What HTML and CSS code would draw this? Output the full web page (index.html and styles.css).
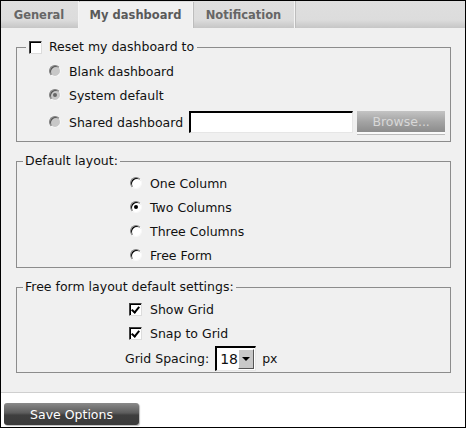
FILE: index.html
```html
<!DOCTYPE html>
<html lang="en">
<head>
    <meta charset="UTF-8"/>
    <title>Dashboard Options</title>
    <link rel="stylesheet" href="styles.css">
</head>
<body>
<div class="frame">
    <div class="tabs">
        <span class="tab tab-general">General</span>
        <span class="tab tab-dashboard active">My dashboard</span>
        <span class="tab tab-notify">Notification</span>
    </div>

    <div class="panel">
        <fieldset class="group group-reset">
            <legend><span class="check"></span>Reset my dashboard to</legend>
            <div class="row"><span class="radio off"></span>Blank dashboard</div>
            <div class="row"><span class="radio off on"></span>System default</div>
            <div class="row row-shared">
                <span class="radio off"></span>Shared dashboard
                <span class="textbox"></span>
                <span class="browse">Browse...</span>
            </div>
        </fieldset>

        <fieldset class="group group-layout">
            <legend>Default layout:</legend>
            <div class="row"><span class="radio"></span>One Column</div>
            <div class="row"><span class="radio on"></span>Two Columns</div>
            <div class="row"><span class="radio"></span>Three Columns</div>
            <div class="row"><span class="radio"></span>Free Form</div>
        </fieldset>

        <fieldset class="group group-free">
            <legend>Free form layout default settings:</legend>
            <div class="row"><span class="check on"></span>Show Grid</div>
            <div class="row"><span class="check on"></span>Snap to Grid</div>
            <div class="row row-spacing">
                Grid Spacing:
                <span class="select"><span class="select-value">18</span><span class="select-arrow"></span></span>
                px
            </div>
        </fieldset>
    </div>

    <div class="footer">
        <button class="save" type="button">Save Options</button>
    </div>
</div>
</body>
</html>
```

FILE: styles.css
```css
body {
    margin: 0;
    font-family: "DejaVu Sans", Verdana, sans-serif;
    font-size: 12.5px;
    color: #111;
}

.frame {
    width: 466px;
    height: 428px;
    box-sizing: border-box;
    border: 1px solid #000;
    background-color: #fff;
}

/* tab strip */
.tabs {
    display: flex;
    height: 27px;
    background: linear-gradient(#dfdfdf 0%, #dcdcdc 70%, #c6c6c6 100%);
}

.tab {
    display: flex;
    align-items: center;
    justify-content: center;
    font-size: 11.5px;
    font-weight: bold;
    color: #666;
    border-right: 1px solid #f4f4f4;
    box-shadow: 1px 0 0 #bdbdbd;
}

.tab-general {
    width: 76px;
    padding-right: 1px;
}

.tab-dashboard {
    width: 113px;
}

.tab-notify {
    width: 101px;
}

.tab.active {
    background-color: #f0f0f0;
    margin-top: 1px;
    color: #5a5a5a;
}

/* main panel */
.panel {
    background-color: #f0f0f0;
    padding: 12px 14px 19px 15px;
    border-bottom: 1px solid #cfcfcf;
}

.group {
    margin: 0;
    padding: 0 0 4px 0;
    border: 1px solid #8c8c8c;
    min-inline-size: 0;
}

.group + .group {
    margin-top: 12px;
}

.group legend {
    display: flex;
    align-items: center;
    line-height: 14px;
    height: 14px;
    padding: 0 2px;
    margin-left: 6px;
}

.group-reset legend {
    margin-left: 9px;
    padding: 0 3px;
    gap: 7px;
}

.group-reset {
    padding-top: 5px;
}

.group-layout,
.group-free {
    padding-top: 3px;
    padding-bottom: 0;
}

.row {
    display: flex;
    align-items: center;
    gap: 8px;
    height: 24px;
}

.group-reset .row {
    padding-left: 32px;
}

.group-layout .row {
    padding-left: 113px;
}

.group-free .row {
    padding-left: 112px;
}

.group-free .row-spacing {
    padding-left: 108px;
    height: 27px;
    gap: 6px;
}

.row-shared {
    height: 30px !important;
}

/* classic widgets */
.radio {
    width: 10px;
    height: 10px;
    flex: none;
    border-radius: 50%;
    background-color: #fff;
    border: 1px solid;
    border-color: #808080 #f8f8f8 #f8f8f8 #808080;
    box-shadow: inset 1px 1px 0 #000;
    position: relative;
}

.radio.off {
    background-color: #c8c8c8;
    box-shadow: inset 1px 1px 0 #555;
}

.radio.on::after {
    content: "";
    position: absolute;
    left: 3px;
    top: 3px;
    width: 4px;
    height: 4px;
    border-radius: 50%;
    background-color: #000;
}

.radio.off.on::after {
    background-color: #666;
}

.check {
    width: 11px;
    height: 11px;
    flex: none;
    background-color: #fff;
    border: 1px solid;
    border-color: #404040 #dcdcdc #dcdcdc #404040;
    box-shadow: inset 1px 1px 0 #000;
    position: relative;
}

.check.on::after {
    content: "";
    position: absolute;
    left: 3px;
    top: 1px;
    width: 3px;
    height: 6px;
    border: solid #000;
    border-width: 0 2px 2px 0;
    transform: rotate(40deg);
}

.textbox {
    width: 161px;
    height: 19px;
    margin-left: -2px;
    background-color: #fff;
    border: solid;
    border-color: #000 #e6e6e6 #e6e6e6 #000;
    border-width: 2px 1px 1px 2px;
}

.browse {
    width: 88px;
    height: 21px;
    margin-left: -4px;
    display: flex;
    align-items: center;
    justify-content: center;
    color: #d8d8d8;
    background: linear-gradient(#c4c4c4, #a4a4a4 50%, #8c8c8c);
    border-bottom: 2px solid #fafafa;
    box-shadow: 0 1px 0 #bbb;
}

.select {
    display: flex;
    width: 38px;
    height: 22px;
    background-color: #fff;
    border: solid;
    border-color: #000 #e6e6e6 #e6e6e6 #000;
    border-width: 2px 1px 1px 2px;
}

.select-value {
    flex: 1;
    padding-left: 3px;
    font-size: 14px;
    line-height: 22px;
}

.select-arrow {
    width: 16px;
    height: 20px;
    margin: 1px 1px 1px 0;
    background-color: #c8c8c8;
    border: 1px solid;
    border-color: #fff #555 #555 #fff;
    box-sizing: border-box;
    position: relative;
}

.select-arrow::after {
    content: "";
    position: absolute;
    left: 3px;
    top: 7px;
    border-left: 4px solid transparent;
    border-right: 4px solid transparent;
    border-top: 4px solid #000;
}

/* footer */
.footer {
    padding: 10px 3px 0;
}

.save {
    width: 135px;
    height: 22px;
    padding: 0;
    font-family: "DejaVu Sans", Verdana, sans-serif;
    font-size: 12.5px;
    color: #fff;
    background: linear-gradient(#8a8a8a, #5c5c5c 45%, #3e3e3e 55%, #3a3a3a);
    border: none;
    border-radius: 3px;
    box-shadow: 1px 1px 1px #bbb;
}
```
